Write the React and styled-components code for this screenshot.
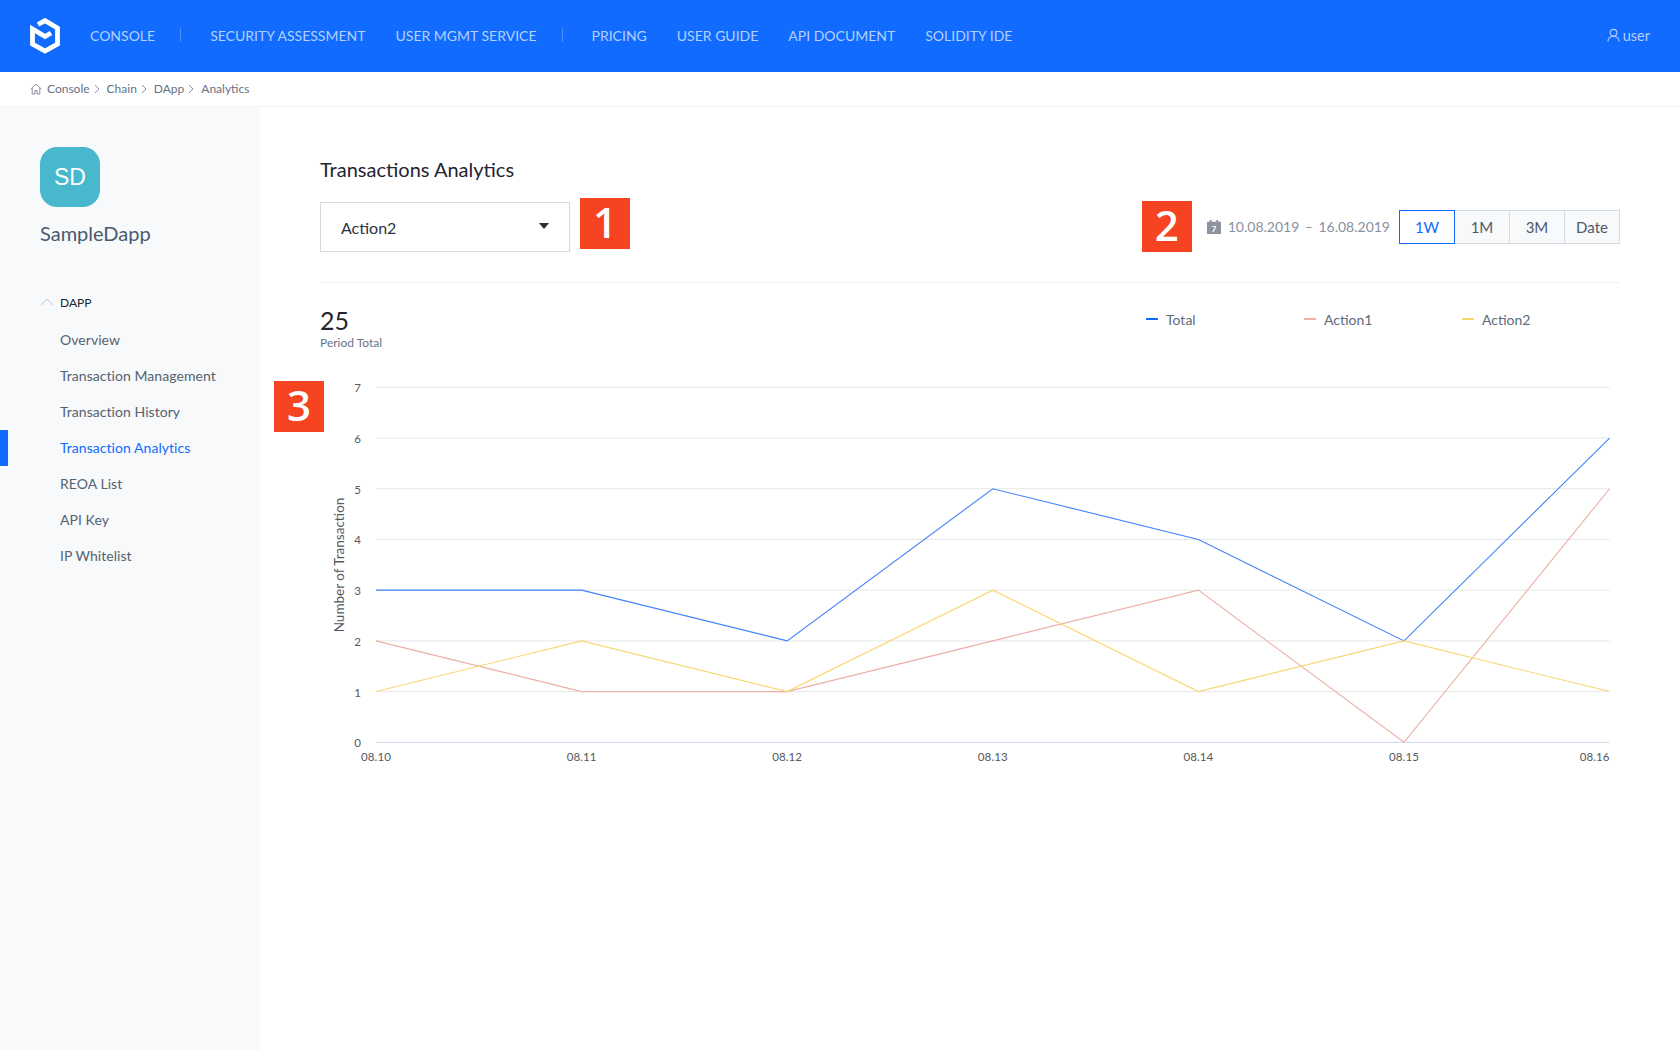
import React from 'react'
import styled, { createGlobalStyle } from 'styled-components'

const navGroups = [
  ['CONSOLE'],
  ['SECURITY ASSESSMENT', 'USER MGMT SERVICE'],
  ['PRICING', 'USER GUIDE', 'API DOCUMENT', 'SOLIDITY IDE'],
]
const crumbs = ['Console', 'Chain', 'DApp', 'Analytics']
const menu = ['Overview', 'Transaction Management', 'Transaction History', 'Transaction Analytics', 'REOA List', 'API Key', 'IP Whitelist']
const ranges = ['1W', '1M', '3M', 'Date']
const dates = ['08.10', '08.11', '08.12', '08.13', '08.14', '08.15', '08.16']
const series = [
  { name: 'Total', color: '#116bff', line: '#3f83fb', data: [3, 3, 2, 5, 4, 2, 6] },
  { name: 'Action1', color: '#eeb1aa', line: '#edaea6', data: [2, 1, 1, 2, 3, 0, 5] },
  { name: 'Action2', color: '#f9d768', line: '#f7d872', data: [1, 2, 1, 3, 1, 2, 1] },
]

const X0 = 56
const XSTEP = 205.6
const Y0 = 355.3
const YSTEP = 50.71
const px = (i) => X0 + i * XSTEP
const py = (v) => Y0 - v * YSTEP

const Global = createGlobalStyle`
  html, body { margin: 0; padding: 0; background: #fff; }
  body { font-family: Lato, "Open Sans", sans-serif; color: #4c5a6b; }
`

const Page = styled.div`
  display: flex;
  flex-direction: column;
  width: 1680px;
  height: 1050px;
  overflow: hidden;
`

const Header = styled.header`
  display: flex;
  align-items: center;
  flex: 0 0 72px;
  padding: 0 30px;
  background: #116bff;
`

const Logo = styled.svg`
  width: 30px;
  height: 36px;
  margin-right: 30px;
`

const NavGroup = styled.nav`
  display: flex;
  gap: 30px;
  align-items: center;
  margin-bottom: 2px;
  & + &::before {
    content: '';
    width: 1px;
    height: 14px;
    margin-right: -1px;
    background: rgba(255, 255, 255, 0.25);
  }
  & + & { margin-left: 25px; }
`

const NavLink = styled.a`
  font-size: 14px;
  color: #b4d0ff;
  white-space: nowrap;
`

const UserBox = styled.div`
  display: flex;
  align-items: center;
  gap: 3px;
  margin: 0 0 2px auto;
  font-size: 14.5px;
  color: #b4d0ff;
`

const Breadcrumb = styled.div`
  display: flex;
  align-items: center;
  flex: 0 0 33px;
  padding: 0 0 1px 30px;
  font-size: 12px;
  color: #68727f;
  border-bottom: 1px solid #f1f2f4;
`

const CrumbItem = styled.span`
  display: flex;
  align-items: center;
  margin-right: 6px;
`

const CrumbArrow = styled.svg`
  width: 6px;
  height: 10px;
  margin: 0 1px 0 4px;
`

const HomeIcon = styled.svg`
  width: 12px;
  height: 12px;
  margin-right: 5px;
`

const Body = styled.div`
  display: flex;
  flex: 1;
  min-height: 0;
`

const Sidebar = styled.aside`
  flex: 0 0 260px;
  padding-top: 40px;
  background: #f7f9fb;
`

const AppIcon = styled.div`
  display: flex;
  align-items: center;
  justify-content: center;
  width: 60px;
  height: 60px;
  margin-left: 40px;
  border-radius: 17px;
  background: #48b8cc;
  color: #fff;
  font-family: "Liberation Sans", sans-serif;
  font-size: 23px;
`

const AppName = styled.div`
  margin: 12px 0 0 40px;
  font-size: 20px;
  line-height: 28px;
  color: #4a5a6e;
`

const MenuTitle = styled.div`
  display: flex;
  align-items: center;
  height: 20px;
  margin: 45px 0 10px 40px;
  font-size: 12px;
  color: #20262e;
`

const Chevron = styled.svg`
  width: 14px;
  height: 8px;
  margin-right: 6px;
`

const MenuList = styled.ul`
  list-style: none;
  margin: 0;
  padding: 0;
`

const MenuItem = styled.li`
  height: 36px;
  line-height: 36px;
  padding-left: 60px;
  font-size: 14px;
  letter-spacing: 0.05px;
  color: ${(p) => (p.$active ? '#116bff' : '#55626f')};
  box-shadow: ${(p) => (p.$active ? 'inset 8px 0 0 #116bff' : 'none')};
`

const Main = styled.main`
  flex: 1;
  padding: 47px 60px 0;
  min-width: 0;
`

const Title = styled.h1`
  margin: 0;
  height: 30px;
  font-size: 20px;
  line-height: 30px;
  font-weight: 400;
  color: #1f2530;
`

const ControlRow = styled.div`
  display: flex;
  align-items: center;
  height: 57px;
  margin-top: 14px;
`

const Select = styled.div`
  display: flex;
  align-items: center;
  justify-content: space-between;
  box-sizing: border-box;
  width: 250px;
  height: 50px;
  margin-top: 1px;
  padding: 0 20px;
  border: 1px solid #d5dbe3;
  font-size: 16px;
  color: #2c3440;
`

const Caret = styled.span`
  width: 0;
  height: 0;
  margin-bottom: 3px;
  border-left: 5.5px solid transparent;
  border-right: 5.5px solid transparent;
  border-top: 6px solid #262f3c;
`

const Badge = styled.div`
  display: flex;
  align-items: center;
  justify-content: center;
  box-sizing: border-box;
  flex: 0 0 50px;
  width: 50px;
  height: 51px;
  padding-bottom: 3px;
  background: #f64321;
  color: #fff;
  font-family: "Open Sans", sans-serif;
  font-size: 42px;
  font-weight: 600;
  line-height: 1;
`

const SelectBadge = styled(Badge)`
  align-self: flex-start;
  margin-left: 10px;
`

const RangeBadge = styled(Badge)`
  margin-left: auto;
`

const ChartBadge = styled(Badge)`
  position: absolute;
  left: -46px;
  top: -6px;
`

const DateRange = styled.div`
  display: flex;
  align-items: center;
  margin: 0 9px 0 15px;
  font-size: 14px;
  color: #87919d;
  white-space: nowrap;
`

const DateDash = styled.span`
  margin: 0 5.5px;
`

const CalendarIcon = styled.svg`
  width: 14px;
  height: 15px;
  margin-right: 7px;
`

const RangeGroup = styled.div`
  display: flex;
  margin-top: 1px;
`

const RangeButton = styled.button`
  box-sizing: border-box;
  width: 56px;
  height: 34px;
  margin-left: ${(p) => (p.$first ? '0' : '-1px')};
  padding: 0;
  position: relative;
  z-index: ${(p) => (p.$active ? 1 : 0)};
  border: 1px solid ${(p) => (p.$active ? '#116bff' : '#d5dbe3')};
  background: ${(p) => (p.$active ? '#fff' : '#f7f9fb')};
  color: ${(p) => (p.$active ? '#116bff' : '#4c5a6b')};
  font-family: inherit;
  font-size: 15px;
`

const Divider = styled.hr`
  height: 1px;
  margin: 27px 0 0;
  border: none;
  background: #eef0f2;
`

const SummaryRow = styled.div`
  display: flex;
  justify-content: space-between;
  box-sizing: border-box;
  height: 104px;
  padding-top: 23px;
`

const Total = styled.div`
  font-size: 25px;
  line-height: 29px;
  color: #1f2530;
`

const TotalLabel = styled.div`
  font-size: 12px;
  line-height: 16px;
  color: #667487;
`

const Legend = styled.div`
  display: flex;
  width: 474px;
  height: 28px;
  margin-top: -1px;
`

const LegendItem = styled.div`
  display: flex;
  align-items: center;
  width: 158px;
  height: 28px;
  font-size: 14px;
  color: #5d6b7c;
`

const LegendMark = styled.span`
  width: 12px;
  height: 2px;
  margin-right: 8px;
  background: ${(p) => p.$color};
`

const ChartWrap = styled.div`
  position: relative;
  height: 400px;
`

const ChartSvg = styled.svg`
  display: block;
  width: 1300px;
  height: 400px;
  overflow: visible;
`

const AxisText = styled.text`
  font-family: Lato, sans-serif;
  font-size: 11.5px;
  letter-spacing: 0.1px;
  fill: #55585d;
`

const AxisTitle = styled(AxisText)`
  font-size: 13.5px;
  letter-spacing: 0;
`

function Chart() {
  return (
    <ChartSvg viewBox="0 0 1300 400">
      {[0, 1, 2, 3, 4, 5, 6, 7].map((v) => (
        <g key={v}>
          <line x1={X0} x2={px(6)} y1={py(v)} y2={py(v)} stroke={v === 0 ? '#ccd6eb' : '#e6e7ea'} strokeWidth="1" />
          <AxisText x={X0 - 15} y={py(v) + 5} textAnchor="end">{v}</AxisText>
        </g>
      ))}
      {dates.map((d, i) => (
        <AxisText key={d} x={px(i)} y={Y0 + 19} textAnchor={i === 6 ? 'end' : 'middle'}>{d}</AxisText>
      ))}
      <AxisTitle x={0} y={0} textAnchor="middle" transform="translate(24 178) rotate(-90)">Number of Transaction</AxisTitle>
      {series.map((s) => (
        <polyline
          key={s.name}
          fill="none"
          stroke={s.line}
          strokeWidth="1.1"
          points={s.data.map((v, i) => `${px(i)},${py(v)}`).join(' ')}
        />
      ))}
    </ChartSvg>
  )
}

export default function App() {
  return (
    <Page>
      <Global />
      <Header>
        <Logo viewBox="0 0 30 36">
          <path d="M8 6.5 L15 2.6 L27.5 10 V26 L15 33 L2.5 26 V11 L15 18.5 L21 15" fill="none" stroke="#fff" strokeWidth="4.8" />
        </Logo>
        {navGroups.map((group, i) => (
          <NavGroup key={i}>
            {group.map((name) => <NavLink key={name}>{name}</NavLink>)}
          </NavGroup>
        ))}
        <UserBox>
          <svg width="13" height="14" viewBox="0 0 14 15" fill="none" stroke="#b4d0ff" strokeWidth="1.2">
            <circle cx="7" cy="5" r="3.6" />
            <path d="M1 14.5c0-3.2 2.4-5.4 6-5.4s6 2.2 6 5.4" />
          </svg>
          user
        </UserBox>
      </Header>
      <Breadcrumb>
        <HomeIcon viewBox="0 0 12 12" fill="none" stroke="#7d8692" strokeWidth="0.9">
          <path d="M0.8 6 6 1.2 11.2 6M2.2 5v6h2.8V7.6h2V11h2.8V5" />
        </HomeIcon>
        {crumbs.map((c, i) => (
          <CrumbItem key={c}>
            {c}
            {i < crumbs.length - 1 && (
              <CrumbArrow viewBox="0 0 6 10" fill="none" stroke="#7d8692" strokeWidth="0.9">
                <path d="M1 1l4 4-4 4" />
              </CrumbArrow>
            )}
          </CrumbItem>
        ))}
      </Breadcrumb>
      <Body>
        <Sidebar>
          <AppIcon>SD</AppIcon>
          <AppName>SampleDapp</AppName>
          <MenuTitle>
            <Chevron viewBox="0 0 14 8" fill="none" stroke="#c4cad2" strokeWidth="1">
              <path d="M1 7l6-6 6 6" />
            </Chevron>
            DAPP
          </MenuTitle>
          <MenuList>
            {menu.map((m) => (
              <MenuItem key={m} $active={m === 'Transaction Analytics'}>{m}</MenuItem>
            ))}
          </MenuList>
        </Sidebar>
        <Main>
          <Title>Transactions Analytics</Title>
          <ControlRow>
            <Select>
              Action2
              <Caret />
            </Select>
            <SelectBadge>1</SelectBadge>
            <RangeBadge>2</RangeBadge>
            <DateRange>
              <CalendarIcon viewBox="0 0 15 16">
                <path d="M0 3h3V1h2v2h5V1h2v2h3v13H0z" fill="#8a939e" />
                <text x="7.5" y="13.5" textAnchor="middle" fontSize="9" fontWeight="700" fontFamily="Lato" fill="#fff">7</text>
              </CalendarIcon>
              10.08.2019
              <DateDash>–</DateDash>
              16.08.2019
            </DateRange>
            <RangeGroup>
              {ranges.map((r, i) => (
                <RangeButton key={r} $active={i === 0} $first={i === 0}>{r}</RangeButton>
              ))}
            </RangeGroup>
          </ControlRow>
          <Divider />
          <SummaryRow>
            <div>
              <Total>25</Total>
              <TotalLabel>Period Total</TotalLabel>
            </div>
            <Legend>
              {series.map((s) => (
                <LegendItem key={s.name}>
                  <LegendMark $color={s.color} />
                  {s.name}
                </LegendItem>
              ))}
            </Legend>
          </SummaryRow>
          <ChartWrap>
            <ChartBadge>3</ChartBadge>
            <Chart />
          </ChartWrap>
        </Main>
      </Body>
    </Page>
  )
}
